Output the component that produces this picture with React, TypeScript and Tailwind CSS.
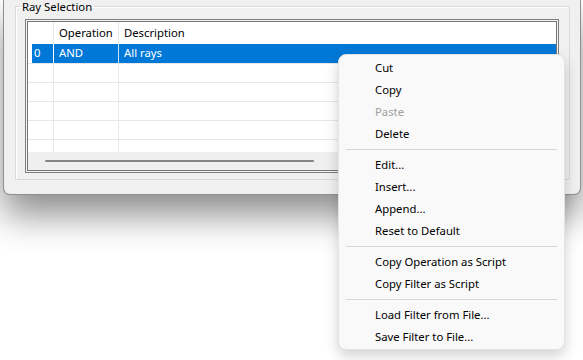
import React from "react";

type Row = { id: string; op: string; desc: string; selected?: boolean };

const rows: Row[] = [
  { id: "0", op: "AND", desc: "All rays", selected: true },
  { id: "", op: "", desc: "" },
  { id: "", op: "", desc: "" },
  { id: "", op: "", desc: "" },
  { id: "", op: "", desc: "" },
  { id: "", op: "", desc: "" },
];

type MenuEntry = { label: string; disabled?: boolean } | "sep";

const menu: MenuEntry[] = [
  { label: "Cut" },
  { label: "Copy" },
  { label: "Paste", disabled: true },
  { label: "Delete" },
  "sep",
  { label: "Edit..." },
  { label: "Insert..." },
  { label: "Append..." },
  { label: "Reset to Default" },
  "sep",
  { label: "Copy Operation as Script" },
  { label: "Copy Filter as Script" },
  "sep",
  { label: "Load Filter from File..." },
  { label: "Save Filter to File..." },
];

function FilterGrid() {
  return (
    <div className="w-[534px] h-[154px] border border-[#7f7f7f] p-[1px] bg-[#f4f4f4]">
      <div className="h-full border border-[#767676] bg-white flex flex-col">
        <div className="h-[130px] overflow-hidden">
          {/* header */}
          <div className="flex h-[22px] items-center text-black">
            <div className="w-[26px] h-full border-r border-[#e6e6e6]" />
            <div className="w-[65px] h-full border-r border-[#e6e6e6] pl-[5px] flex items-center">
              Operation
            </div>
            <div className="flex-1 pl-[5px]">Description</div>
          </div>
          {rows.map((r, i) =>
            r.selected ? (
              <div key={i} className="flex h-[20px] border-b border-[#e6e6e6]">
                <div className="w-[26px] h-full pl-[4px] border-r border-white/80">
                  <div className="h-full bg-[#0078d7] text-white pl-[2px] flex items-center">
                    {r.id}
                  </div>
                </div>
                <div className="w-[65px] h-full bg-[#0078d7] text-white border-r border-white/80 pl-[5px] flex items-center">
                  {r.op}
                </div>
                <div className="flex-1 h-full bg-[#0078d7] text-white pl-[5px] flex items-center">
                  {r.desc}
                </div>
              </div>
            ) : (
              <div key={i} className="flex h-[19px] border-b border-[#e8e8e8]">
                <div className="w-[26px] h-full border-r border-[#e8e8e8]" />
                <div className="w-[65px] h-full border-r border-[#e8e8e8]" />
                <div className="flex-1" />
              </div>
            )
          )}
        </div>
        {/* horizontal scrollbar */}
        <div className="h-[18px] bg-[#efefef] flex items-center">
          <div className="ml-[17px] w-[269px] h-[2px] rounded-full bg-[#858585]" />
        </div>
      </div>
    </div>
  );
}

function ContextMenu() {
  return (
    <div className="absolute left-[338px] top-[54px] w-[227px] rounded-[8px] border border-[#e3e3e3] bg-[#f9f9f9] pt-[2px] pb-[1px] shadow-[0_6px_14px_rgba(0,0,0,0.18)]">
      {menu.map((m, i) =>
        m === "sep" ? (
          <div key={i} className="h-[9px] flex items-center px-[7px]">
            <div className="h-px w-full bg-[#d7d7d7]" />
          </div>
        ) : (
          <div
            key={i}
            className={
              "h-[22px] flex items-center pl-[36px] " +
              (m.disabled ? "text-[#a0a0a0]" : "text-black")
            }
          >
            {m.label}
          </div>
        )
      )}
    </div>
  );
}

export default function App() {
  return (
    <div
      className="relative w-[583px] h-[360px] overflow-hidden bg-white text-[11.3px]"
      style={{ fontFamily: '"Noto Sans", "Segoe UI", sans-serif' }}
    >
      <div className="ml-[3px] w-[578px] h-[195px] bg-[#f0f0f0] border-x border-b border-[#8e8e8e] rounded-b-[7px] pl-[11px] pb-[14px] shadow-[0_20px_36px_rgba(0,0,0,0.45)]">
        <fieldset className="w-[555px] h-[180px] border border-[#d9d9d9] shadow-[inset_1px_1px_0_#fff]">
          <legend className="ml-[4px] px-[2px] pt-[2px] leading-[10px] text-black">Ray Selection</legend>
          <div className="pt-[7px] pl-[9px]">
            <FilterGrid />
          </div>
        </fieldset>
      </div>
      <ContextMenu />
    </div>
  );
}
